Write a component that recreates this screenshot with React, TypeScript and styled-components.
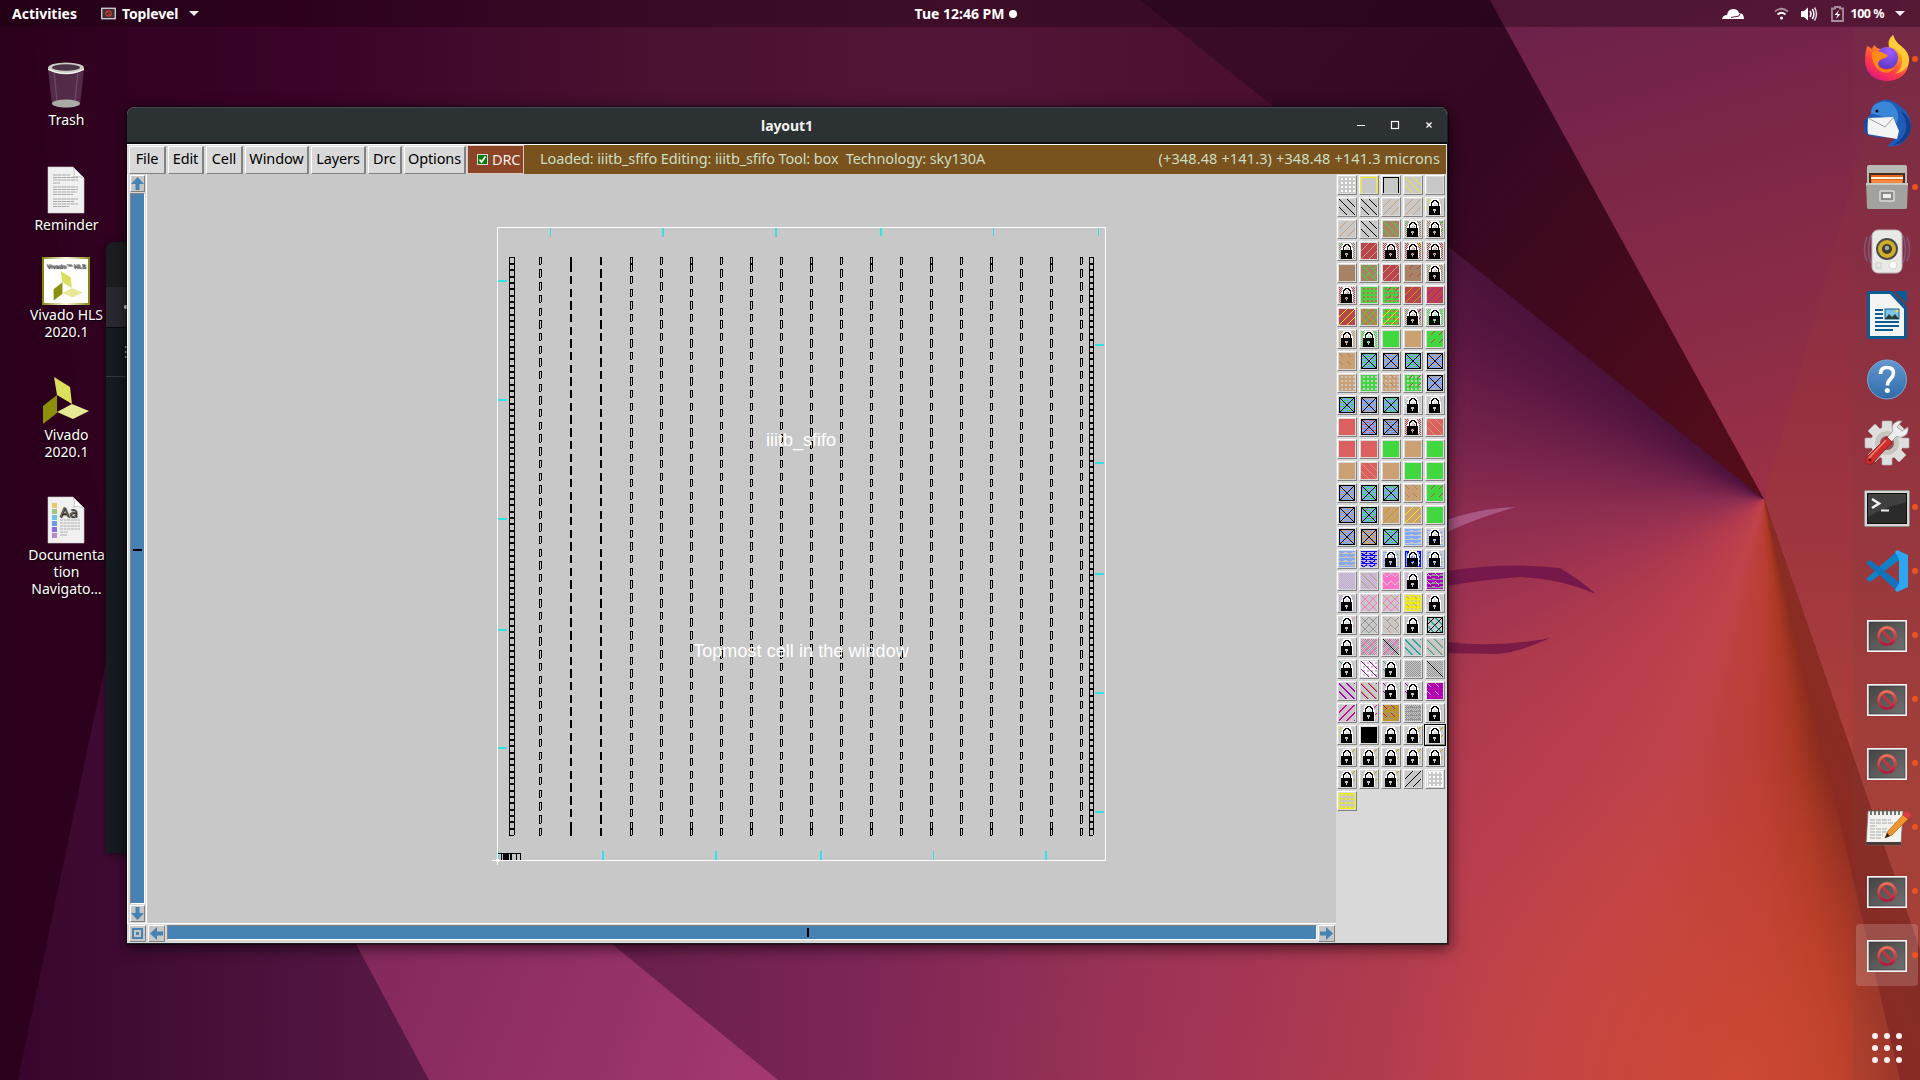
import React from "react";
import styled, { createGlobalStyle } from "styled-components";

const UI = `"Noto Sans", "Open Sans", sans-serif`;

const Global = createGlobalStyle`
  html, body { margin: 0; padding: 0; background: #2c001e; }
  * { box-sizing: border-box; }
`;

/* ---------- wallpaper ---------- */
const Screen = styled.div`
  position: relative;
  width: 1920px;
  height: 1080px;
  overflow: hidden;
  font-family: ${UI};
  color: #fff;
  display: flex;
  flex-direction: column;
`;
const WallSvg = styled.svg`
  position: absolute;
  left: 0;
  top: 0;
`;
const Fan = styled.div`
  position: absolute;
  inset: 0;
  clip-path: polygon(1271px 105px, 1764px 499px, 1920px 950px, 1920px 1080px, 640px 1080px, 560px 800px, 1271px 400px);
  background:
    linear-gradient(90deg, #6a1f4d 640px, rgba(120, 36, 86, 0.9) 860px, rgba(140, 45, 92, 0.6) 1120px, rgba(170, 55, 80, 0) 1480px),
    radial-gradient(circle at 1740px 1080px, rgba(212, 76, 52, 0.75), rgba(212, 76, 52, 0) 330px),
    conic-gradient(
      from 150deg at 1764px 499px,
      #8a2a20 0deg,
      #852820 16deg,
      #94301f 19deg,
      #ab3824 23deg,
      #ba3d34 30deg,
      #c0434a 48deg,
      #b83e4d 68deg,
      #b03a4e 84deg,
      #a03450 100deg,
      #8c2c50 118deg,
      #6e2048 136deg,
      #561540 150deg,
      #4a123a 159deg,
      #4a123a 360deg
    );
`;

const Wallpaper = () => (
  <>
    <WallSvg width="1920" height="1080" viewBox="0 0 1920 1080">
      <defs>
        <linearGradient id="base" x1="0" y1="0" x2="1200" y2="0" gradientUnits="userSpaceOnUse">
          <stop offset="0" stopColor="#2d001d" />
          <stop offset=".25" stopColor="#3a0327" />
          <stop offset=".55" stopColor="#4a1130" />
          <stop offset=".8" stopColor="#531537" />
          <stop offset="1" stopColor="#4b1030" />
        </linearGradient>
        <linearGradient id="low" x1="0" y1="0" x2="450" y2="0" gradientUnits="userSpaceOnUse">
          <stop offset="0" stopColor="#36052a" />
          <stop offset="1" stopColor="#5b1a49" />
        </linearGradient>
        <linearGradient id="pink" x1="380" y1="940" x2="760" y2="1080" gradientUnits="userSpaceOnUse">
          <stop offset="0" stopColor="#84295c" />
          <stop offset="1" stopColor="#a3386f" />
        </linearGradient>
      </defs>
      <rect width="1920" height="1080" fill="url(#base)" />
      <path d="M0 0H28L80 430L122 585L18 1080H0z" fill="#28001b" opacity=".35" />
      <path d="M122 585L18 1080H800V700z" fill="url(#low)" />
    </WallSvg>
    <Fan />
    <WallSvg width="1920" height="1080" viewBox="0 0 1920 1080">
      <defs>
        <linearGradient id="wedge" x1="1180" y1="0" x2="1764" y2="499" gradientUnits="userSpaceOnUse">
          <stop offset="0" stopColor="#3b0c28" />
          <stop offset=".4" stopColor="#340722" />
          <stop offset="1" stopColor="#560d18" />
        </linearGradient>
        <linearGradient id="upper" x1="1600" y1="0" x2="1740" y2="480" gradientUnits="userSpaceOnUse">
          <stop offset="0" stopColor="#6d214a" />
          <stop offset=".5" stopColor="#822947" />
          <stop offset="1" stopColor="#993045" />
        </linearGradient>
        <linearGradient id="right" x1="1890" y1="30" x2="1860" y2="800" gradientUnits="userSpaceOnUse">
          <stop offset="0" stopColor="#782747" />
          <stop offset=".5" stopColor="#973141" />
          <stop offset="1" stopColor="#ae4138" />
        </linearGradient>
        <linearGradient id="fold" x1="1800" y1="840" x2="1880" y2="800" gradientUnits="userSpaceOnUse">
          <stop offset="0" stopColor="#8c2820" />
          <stop offset="1" stopColor="#8a2c24" />
        </linearGradient>
      </defs>
      <path d="M340 880H576L612 944L778 1080H429L356 944z" fill="url(#pink)" />
      <path d="M1140 0H1490L1764 499z" fill="url(#wedge)" />
      <path d="M1490 0H1920V300L1764 499z" fill="url(#upper)" />
      <path d="M1920 0H1904L1764 499L1920 950z" fill="url(#right)" />
      <path d="M1764 499L1900 1080H1920V950z" fill="url(#fold)" />
      <path d="M1447 520Q1480 508 1516 507Q1480 517 1447 532z" fill="#a85783" />
      <path d="M1447 571Q1510 562 1560 568Q1580 580 1596 594Q1560 578 1520 577Q1480 580 1447 586z" fill="#76194a" />
      <path d="M1447 642Q1500 648 1550 638Q1520 652 1497 654L1447 653z" fill="#7a1c46" />
    </WallSvg>
  </>
);

/* ---------- top bar ---------- */
const TopBar = styled.header`
  position: relative;
  height: 27px;
  flex: none;
  display: grid;
  grid-template-columns: 1fr auto 1fr;
  align-items: center;
  background: rgba(20, 0, 14, 0.34);
  font-size: 14px;
  font-weight: 700;
  line-height: 26px;
  white-space: nowrap;
`;
const BarLeft = styled.div`
  display: flex;
  align-items: center;
  padding-left: 12px;
`;
const Word = styled.span<{ $ls?: number; $w?: number }>`
  letter-spacing: ${(p) => p.$ls ?? 0}px;
  width: ${(p) => (p.$w ? p.$w + "px" : "auto")};
  white-space: pre;
`;
const Clock = styled.div`
  display: flex;
  align-items: center;
  gap: 5px;
  padding-left: 12px;
`;
const Dot = styled.i`
  width: 8px;
  height: 8px;
  border-radius: 50%;
  background: #fff;
`;
const BarRight = styled.div`
  display: flex;
  justify-content: flex-end;
  align-items: center;
  padding-right: 15px;
  font-size: 12.5px;
`;
const Gap = styled.i<{ $w: number }>`
  width: ${(p) => p.$w}px;
`;
const Caret = styled.i`
  border: 5px solid transparent;
  border-top-color: #f2eef0;
  border-bottom: 0;
`;

/* ---------- desktop ---------- */
const Main = styled.div`
  position: relative;
  flex: 1;
  display: flex;
  justify-content: space-between;
`;
const Desk = styled.div`
  width: 132px;
  padding-top: 34px;
  display: grid;
  grid-template-rows: 105px 91px 120px 119px auto;
  align-content: start;
`;
const DeskItem = styled.div`
  display: flex;
  flex-direction: column;
  align-items: center;
  font-size: 14px;
  line-height: 17px;
  text-align: center;
  white-space: pre;
  text-shadow: 1px 1px 1px #000;
  svg {
    display: block;
    margin-bottom: 1px;
    flex: none;
  }
`;
const Label = styled.div<{ $drop?: boolean }>`
  padding-left: 1px;
  padding-top: ${(p) => (p.$drop ? 1 : 0)}px;
`;

const TrashIcon = () => (
  <svg width="48" height="48" viewBox="0 0 48 48">
    <path d="M6 8L10 44Q24 50 38 44L42 8z" fill="#573350" opacity=".85" />
    <path d="M12 10l3 30M36 10l-3 30" stroke="#7a5a74" strokeWidth="1.5" opacity=".6" />
    <ellipse cx="24" cy="42.500" rx="14" ry="4" fill="#a9aca5" />
    <ellipse cx="24" cy="7" rx="18" ry="5.500" fill="#c9cbc4" />
    <ellipse cx="24" cy="6.500" rx="14" ry="3.200" fill="#4c3446" />
    <path d="M6 7.500Q24 16 42 7.500V9Q24 17.500 6 9z" fill="#f1f1ee" />
  </svg>
);
const Page = ({ rich }: { rich?: boolean }) => (
  <svg width="48" height="48" viewBox="0 0 48 48">
    <path d="M6 1H31L42 12V47H6z" fill="#f0f0f0" stroke="#cfcfcf" strokeWidth=".6" />
    <path d="M31 1Q34 8 31 11Q36 9 42 12z" fill="#fff" stroke="#bdbdbd" strokeWidth=".8" />
    {rich ? (
      <>
        {["#e8c96a", "#9fc58a", "#71c4de", "#6f9de8", "#8871dd", "#b78ad0"].map((c, i) => (
          <rect key={c} x="10" y={7 + i * 6} width="5" height="5" fill={c} />
        ))}
        <text x="17.500" y="21" fontSize="15" fill="#555" fontFamily="Noto Sans">Aa</text>
        {[24, 27, 30, 33, 36].map((y, i) => (
          <path key={y} d={`M18 ${y}H${i === 4 ? 26 : 38}`} stroke="#aaa" strokeDasharray="3 .6" />
        ))}
        <path d="M18 39H25" stroke="#aaa" />
      </>
    ) : (
      [9, 11.5, 14, 17, 21, 23.5, 26, 28.5, 33, 35.5, 38, 40.5].map((y, i) => (
        <path key={y} d={`M11 ${y}H${[28, 36, 36, 18, 36, 36, 35, 31, 36, 32, 36, 27][i]}`} stroke="#a5a5a5" strokeWidth="1.100" strokeDasharray="4 .5" />
      ))
    )}
  </svg>
);
const Blades = () => (
  <g>
    <path d="M12 0L28 10L30 27L15 18z" fill="#dbdf5b" />
    <path d="M1 29L15 18V36L1 47z" fill="#8b8f0a" />
    <path d="M15 35L30 27L47 34L31 42z" fill="#e7e995" />
  </g>
);
const VivadoIcon = () => (
  <svg width="48" height="48" viewBox="0 0 48 48"><Blades /></svg>
);
const HlsIcon = () => (
  <svg width="48" height="48" viewBox="0 0 48 48">
    <defs>
      <linearGradient id="hls" x1="0" x2="1">
        <stop offset="0" stopColor="#85880f" />
        <stop offset=".5" stopColor="#fafae8" />
        <stop offset="1" stopColor="#85880f" />
      </linearGradient>
    </defs>
    <rect width="48" height="48" fill="url(#hls)" />
    <rect x="2" y="2" width="44" height="44" fill="#fff" />
    <path d="M0 0h2v48h-2zM46 0h2v48h-2z" fill="#85880f" />
    <text x="24" y="10.500" textAnchor="middle" fontSize="6" fontWeight="700" fill="#777" fontFamily="Liberation Sans">Vivado™ HLS</text>
    <g transform="translate(11 14) scale(.63)"><Blades /></g>
  </svg>
);

/* ---------- dock ---------- */
const Dock = styled.nav`
  width: 67px;
  display: flex;
  flex-direction: column;
  align-items: center;
  background: rgba(120, 60, 60, 0.16);
`;
const DockItem = styled.div<{ $run?: boolean; $active?: boolean }>`
  width: 100%;
  height: 64px;
  flex: none;
  display: flex;
  align-items: center;
  position: relative;
  padding-left: 10px;
  &::before {
    content: "";
    display: ${(p) => (p.$active ? "block" : "none")};
    position: absolute;
    inset: 1px 2px 1px 3px;
    border-radius: 4px;
    background: rgba(255, 255, 255, 0.17);
  }
  &::after {
    content: "";
    display: ${(p) => (p.$run ? "block" : "none")};
    position: absolute;
    right: 2px;
    top: 29px;
    width: 6px;
    height: 6px;
    border-radius: 50%;
    background: #e95420;
  }
  svg { position: relative; }
`;
const Apps = styled.div`
  margin-top: auto;
  margin-bottom: 17px;
  display: grid;
  grid-template-columns: repeat(3, 6px);
  gap: 6px;
  i {
    width: 6px;
    height: 6px;
    border-radius: 50%;
    background: #f3f0f0;
  }
`;

const S = ({ children, dy = 0 }: { children: React.ReactNode; dy?: number }) => (
  <svg width="48" height="48" viewBox={`0 ${-dy} 48 48`}>{children}</svg>
);
const Firefox = () => (
  <S dy={-1}>
    <defs>
      <linearGradient id="ff" x1=".8" y1="0" x2=".25" y2="1">
        <stop offset="0" stopColor="#fff44f" />
        <stop offset=".35" stopColor="#ff9a1f" />
        <stop offset=".7" stopColor="#ff3b45" />
        <stop offset="1" stopColor="#e31587" />
      </linearGradient>
      <radialGradient id="ffg" cx=".6" cy=".2" r=".8">
        <stop offset="0" stopColor="#a45bff" />
        <stop offset="1" stopColor="#5b3bc4" />
      </radialGradient>
    </defs>
    <path d="M4 12Q7 13 9 15L11 11Q13 14 17 15Q23 13 26 13Q24 6 30 1Q32 8 38 12Q46 19 46 26Q45 46 24 47Q3 46 2 26Q2 18 4 12z" fill="url(#ff)" />
    <circle cx="24" cy="24" r="11" fill="url(#ffg)" />
    <path d="M9 18Q15 15 22 20Q26 21 24 23L17 26Q13 30 17 34Q24 38 32 33Q26 42 17 37Q8 31 9 18z" fill="#ff8a16" />
    <path d="M30 1Q26 6 26 13Q36 14 39 24Q40 35 32 40Q46 36 46 26Q46 18 38 12Q32 8 30 1z" fill="#ffd03a" opacity=".85" />
  </S>
);
const Thunderbird = () => (
  <S>
    <path d="M11 6Q22 -4 34 5Q48 13 48 28Q47 40 36 46Q30 48 24 47L34 38Q10 40 2 34Q0 28 1 22L8 15Q8 9 11 6z" fill="#1f5cb8" />
    <path d="M11 6Q20 0 28 4Q38 12 34 24L20 18Q9 14 8 15Q8 9 11 6z" fill="#3a86d8" />
    <path d="M5 19L30 18L36 32L34 40L4 35z" fill="#f3f3f5" />
    <path d="M5 19L22 28L31 18" fill="none" stroke="#9b9ba5" />
    <path d="M1 22Q0 32 6 38Q3 30 5 19z" fill="#174a9b" />
    <path d="M38 12Q46 24 42 34Q38 42 30 46Q46 44 48 28Q47 17 38 12z" fill="#123f8c" />
    <circle cx="14" cy="12" r="1.500" fill="#111" />
  </S>
);
const Files = () => (
  <S>
    <path d="M4 4Q4 2 6 2H42Q44 2 44 4V26H4z" fill="#b9b9b6" />
    <rect x="6" y="10" width="36" height="10" fill="#45301f" />
    <path d="M8 12H40V20H8z" fill="#e8641c" />
    <path d="M8 14H40V16H8z" fill="#fff3d8" />
    <path d="M9 17H39V20H9z" fill="#f5893f" />
    <path d="M3 20H45L44 45Q44 46 42 46H6Q4 46 4 45z" fill="#a2a29e" />
    <path d="M3 20H45V22H3z" fill="#c9c9c6" />
    <rect x="17" y="28" width="14" height="10" rx="1" fill="#8a8a87" stroke="#dcdcda" strokeWidth="1.500" />
    <rect x="20" y="31" width="8" height="4" fill="#eee" />
  </S>
);
const Rhythm = () => (
  <S>
    <path d="M4 10Q-1 22 4 34M8 8Q3 22 8 36M44 10Q49 22 44 34M40 8Q45 22 40 36" fill="none" stroke="#7d83bf" strokeWidth="1.600" opacity=".45" />
    <rect x="9" y="3" width="30" height="43" rx="6" fill="#e9e9e7" stroke="#b9b9b9" />
    <circle cx="24" cy="22" r="11" fill="#4b4b4b" />
    <circle cx="24" cy="22" r="9" fill="#d0ae2a" />
    <circle cx="24" cy="22" r="5" fill="#3c3c30" />
    <circle cx="24" cy="21" r="2.300" fill="#9fa4b5" />
    <circle cx="30" cy="38" r="4" fill="#fff" stroke="#c8c8c8" strokeWidth=".7" />
    <rect x="13" y="36" width="5" height="5" fill="none" stroke="#ccc" />
  </S>
);
const Writer = () => (
  <S>
    <path d="M6 0H29L44 16V46Q44 48 42 48H6Q4 48 4 46V2Q4 0 6 0z" fill="#0b5c92" />
    <path d="M7 3H27L41 18V45H7z" fill="#f4f4f4" />
    <path d="M31 0H44V13z" fill="#0b5c92" />
    <path d="M12 19H20M12 23H20M12 27H20M12 31H36M12 35H36M12 39H30" stroke="#0b5c92" strokeWidth="2" />
    <rect x="22" y="18" width="14" height="10" fill="#7cc5ea" stroke="#0b5c92" />
    <path d="M22 28L26 23L29 26L32 23L36 28z" fill="#2c3b33" />
    <circle cx="34" cy="20" r="1.600" fill="#f0d040" />
  </S>
);
const Help = () => (
  <S>
    <defs>
      <linearGradient id="hp" x1="0" x2="0" y1="0" y2="1">
        <stop offset="0" stopColor="#6396d0" />
        <stop offset="1" stopColor="#2f6da8" />
      </linearGradient>
    </defs>
    <circle cx="24" cy="24.500" r="19.500" fill="url(#hp)" stroke="#7aa7d4" />
    <path d="M17.500 19Q17.500 12.500 24 12.500Q30.500 12.500 30.500 18Q30.500 21 27.500 24Q24.500 26.500 24.500 30.500" fill="none" stroke="#fff" strokeWidth="3.600" />
    <circle cx="24.300" cy="35.500" r="2.500" fill="#fff" />
  </S>
);
const Tools = () => (
  <S dy={-1}>
    <g fill="#dededd" stroke="#b3b3b0" strokeWidth=".7">
      {[0, 45, 90, 135, 180, 225, 270, 315].map((a) => (
        <rect key={a} x="19" y="3" width="10" height="12" rx="1" transform={`rotate(${a} 24 25)`} />
      ))}
    </g>
    <circle cx="24" cy="25" r="16" fill="#dededd" />
    <circle cx="24" cy="25" r="12" fill="#c5c5c2" />
    <circle cx="24" cy="25" r="7" fill="#9b4850" />
    <path d="M24 20L30 13Q27 6 35 3L39 3L34 9L39 13L45 9Q46 17 39 19Q36 20 34 18L28 24z" fill="#eee" stroke="#999" strokeWidth=".8" />
    <path d="M24 19L29 24L10 45Q5 48 3 44Q1 41 5 38z" fill="#cf2f2c" stroke="#8e1a1a" strokeWidth=".8" />
    <path d="M23 22L6 40" stroke="#f18378" strokeWidth="1.500" />
    <circle cx="7" cy="42" r="1.500" fill="#6b1010" />
  </S>
);
const Terminal = () => (
  <S dy={2}>
    <rect x="1.500" y="5.500" width="45" height="36" rx="1" fill="#d6d6d4" stroke="#8b8b89" />
    <rect x="4.500" y="8.500" width="39" height="30" fill="#2b2b2b" stroke="#111" />
    <path d="M5 9H43V17Q22 22 5 32z" fill="#4a4a4a" opacity=".7" />
    <path d="M9 14L16 18.500L9 23" fill="none" stroke="#eee" strokeWidth="2.600" />
    <path d="M18 25.500H26" stroke="#eee" strokeWidth="2" />
  </S>
);
const Code = () => (
  <S>
    <path d="M3 32L7 35L36 13V3L32 6z" fill="#0d82cc" />
    <path d="M3 16L7 13L36 35V45L32 42z" fill="#1272bb" />
    <path d="M34 3L45 8V40L34 45L32 43L36 36V12L32 5z" fill="#2da6f2" />
    <path d="M36 14V34L22 24z" fill="#963a3f" />
  </S>
);
const Blocked = () => (
  <S>
    <defs>
      <linearGradient id="bk" x1="0" y1="0" x2="1" y2="1">
        <stop offset="0" stopColor="#444" />
        <stop offset="1" stopColor="#707070" />
      </linearGradient>
      <linearGradient id="bk2" x1="0" x2="0" y1="0" y2="1">
        <stop offset="0" stopColor="#ee6c54" />
        <stop offset="1" stopColor="#b3183f" />
      </linearGradient>
    </defs>
    <rect x="4" y="9" width="40" height="32" fill="#f2f2f2" />
    <rect x="6" y="11" width="36" height="28" fill="url(#bk)" stroke="#333" strokeWidth=".6" />
    <path d="M17.500 18L30.500 32" stroke="#c93340" strokeWidth="2.600" />
    <circle cx="24" cy="25" r="8.500" fill="none" stroke="url(#bk2)" strokeWidth="2.800" />
  </S>
);
const Notes = () => (
  <S>
    <path d="M5 8H40L38 42H3z" fill="#f2f2ee" stroke="#7a6d68" strokeWidth=".8" />
    <path d="M3 39H38V42H3z" fill="#4b3b38" />
    <path d="M8 7V12M12 7V12M16 7V12M20 7V12M24 7V12M28 7V12M32 7V12M36 7V12" stroke="#555" strokeWidth="1.600" />
    <path d="M7 17H28M7 20H35M7 23H14M7 26H24M7 29H30M7 32H20M7 35H18" stroke="#a9a9a9" strokeDasharray="5 1" />
    <path d="M22 35L25 28L40 12L45 16L29 32z" fill="#f0962d" stroke="#b4631a" strokeWidth=".7" />
    <path d="M40 12L42 9Q47 8 48 12L45 16z" fill="#e0394b" />
    <path d="M22 35L24 30L27 33z" fill="#222" />
  </S>
);

/* ---------- windows ---------- */
const BackWin = styled.div`
  position: absolute;
  left: 106px;
  top: 215px;
  width: 60px;
  height: 611px;
  border-radius: 8px 0 0 0;
  background: #151b20;
  overflow: hidden;
  box-shadow: 0 2px 8px rgba(0, 0, 0, 0.5);
`;
const BackHead = styled.div`
  height: 45px;
  background: #1d1c22;
`;
const BackTab = styled.div`
  height: 41px;
  background: #2a2931;
  border-bottom: 1px solid #08080a;
  padding: 18px 0 0 18px;
  &::after {
    content: "";
    display: block;
    width: 4px;
    height: 4px;
    border-radius: 50%;
    background: #ddd;
  }
`;
const BackRow = styled.div`
  height: 49px;
  border-bottom: 1px solid #333a40;
  padding: 18px 0 0 19px;
  &::after {
    content: "";
    display: block;
    width: 2px;
    height: 12px;
    background: repeating-linear-gradient(#8a8d90 0 2px, transparent 2px 5px);
  }
`;
const Win = styled.section`
  position: absolute;
  left: 127px;
  top: 80px;
  width: 1321px;
  height: 837px;
  border-radius: 8px 8px 0 0;
  background: #d9d9d9;
  overflow: hidden;
  display: flex;
  flex-direction: column;
  border-right: 1px solid #1d1c1e;
  border-bottom: 1px solid #1d1c1e;
`;
const WinShadow = styled.div`
  position: absolute;
  left: 127px;
  top: 80px;
  width: 1321px;
  height: 837px;
  border-radius: 8px 8px 0 0;
  box-shadow: 0 3px 14px 2px rgba(0, 0, 0, 0.55), 0 0 0 1px rgba(0, 0, 0, 0.4);
`;
const TitleBar = styled.div`
  height: 37px;
  flex: none;
  display: grid;
  grid-template-columns: 1fr auto 1fr;
  align-items: center;
  background: #2c3134;
  border-top: 1px solid #454b4e;
  border-bottom: 2px solid #0b0d0e;
  font-size: 14px;
  font-weight: 700;
  color: #f3f3f1;
`;
const WinButtons = styled.div`
  display: flex;
  justify-content: flex-end;
  padding-right: 14px;
`;
const MenuBar = styled.div`
  height: 30px;
  flex: none;
  display: flex;
  padding-left: 1px;
  padding-right: 1px;
  border-top: 1px solid #fff;
  font-size: 14.5px;
  line-height: 26px;
  white-space: pre;
`;
const MenuBtn = styled.div<{ $w: number }>`
  width: ${(p) => p.$w}px;
  height: 28px;
  margin: 1px 1px 0 1px;
  border: 1px solid;
  border-width: 1px 2px 1px 1px;
  border-color: #fff #828282 #828282 #fff;
  background: #d9d9d9;
  color: #000;
  display: flex;
  justify-content: center;
  line-height: 23px;
`;
const Drc = styled.div`
  width: 57px;
  background: #8b4426;
  border: 1px solid #d9c9c0;
  color: #f4ece8;
  display: flex;
  align-items: center;
  padding: 0 0 1px 9px;
  gap: 4px;
`;
const Status = styled.div`
  flex: 1;
  display: flex;
  justify-content: space-between;
  background: #7a521e;
  color: #c9dfc4;
  padding: 0 6px 0 16px;
`;
const Body = styled.div`
  flex: 1;
  display: flex;
  min-height: 0;
`;
const Left = styled.div`
  width: 1209px;
  display: grid;
  grid-template-columns: 20px 1fr;
  grid-template-rows: 749px 20px;
`;
const VScroll = styled.div`
  display: flex;
  flex-direction: column;
  padding: 1px 1px 1px 2px;
  border-left: 1px solid #fff;
  border-right: 1px solid #fff;
  gap: 1px;
`;
const HScroll = styled.div`
  display: flex;
  border-top: 1px solid #fff;
  padding: 1px 1px 0 1px;
  gap: 1px;
`;
const Corner = styled.div`
  border-top: 1px solid #fff;
  padding: 1px 0 0 2px;
`;
const ArrowBox = styled.div`
  width: 17px;
  height: 17px;
  flex: none;
  background: #c6c6c6;
  border: 1px solid;
  border-color: #fff #828282 #828282 #fff;
  display: grid;
  place-items: center;
  ${VScroll} & {
    width: 15px;
  }
`;
const Trough = styled.div<{ $v?: boolean }>`
  flex: 1;
  background: #4682b4;
  border: 1px solid;
  border-color: #828282 #fff #fff #828282;
  margin: ${(p) => (p.$v ? "0" : "0 0 3px 1px")};
  display: flex;
  padding: ${(p) => (p.$v ? "355px 0 0 2px" : "2px 0 0 639px")};
  &::after {
    content: "";
    background: #000;
    width: ${(p) => (p.$v ? 9 : 2)}px;
    height: ${(p) => (p.$v ? 2 : 9)}px;
  }
`;
const Canvas = styled.div`
  background: #c8c8c8;
  svg { display: block; }
`;
const Arrow = ({ r }: { r: number }) => (
  <svg width="13" height="13" viewBox="0 0 13 13">
    <path d="M6.500 0L13 7H8.500V13H4.500V7H0z" fill="#4682b4" transform={`rotate(${r} 6.500 6.500)`} />
  </svg>
);

/* Layout drawing: window coordinates start at (147,174). */
const PITCH = 12.689;
const layoutPath = () => {
  let d = "";
  const cell = (x: number, a: number, b: number, solid: boolean) => {
    const y = Math.round(a);
    const e = Math.ceil(b);
    if (solid) {
      d += `M${x} ${y}h2v${e - y}h-2z`;
      return;
    }
    d += `M${x} ${y}h1v${e - y}h-1zM${x + 2} ${y}h1v${e - y - 1}h-1zM${x} ${y}h3v1h-3zM${x} ${e - 1}h2v1h-2z`;
  };
  for (let i = 0; i < 19; i++) {
    const x = i === 0 ? 539 : 540 + 30 * i;
    const solid = i === 1 || i === 2;
    if (i % 2 === 0) {
      for (let k = 0; k < 46; k++) cell(x, 256.8 + k * PITCH, 264.7 + k * PITCH, solid);
    } else {
      cell(x, 257, 265, solid);
      for (let k = 0; k < 45; k++) cell(x, 263.2 + k * PITCH, 271.1 + k * PITCH, solid);
      cell(x, 828, 836, solid);
    }
  }
  for (const [x, w] of [[509, 6], [1089, 5]]) {
    d += `M${x} 257h1v579h-1zM${x + w - 1} 257h1v578h-1zM${x} 257h${w}v1h-${w}z`;
    for (let k = 1; k < 91; k++) d += `M${x} ${Math.round(256.7 + k * 6.345)}h${w}v2h-${w}z`;
    d += `M${x} 835h${w - 1}v1h-${w - 1}z`;
  }
  d += "M498 853h23v1h-23zM501 853h1v7h-1zM503 853h6v7h-6zM510 853h2v7h-2zM516 853h1v7h-1zM520 853h1v7h-1z";
  return d;
};
const LAYOUT = layoutPath();
const TICKS: number[][] = [
  [550, 228, 1, 8], [662, 228, 2, 9], [775, 228, 2, 9], [880, 228, 2, 8], [993, 228, 1, 8], [1098, 228, 1, 8],
  [498, 280, 9, 2], [498, 399, 9, 2], [498, 518, 9, 2], [498, 629, 9, 2], [498, 747, 9, 2],
  [1095, 344, 9, 2], [1095, 462, 9, 2], [1095, 573, 9, 2], [1095, 692, 9, 2], [1095, 811, 9, 2],
  [498, 851, 1, 9], [602, 851, 2, 9], [715, 851, 2, 9], [820, 851, 2, 9], [933, 851, 1, 9], [1045, 851, 2, 9],
];
const Drawing = () => (
  <svg width="1189" height="749" viewBox="147 174 1189 749">
    <g shapeRendering="crispEdges">
      {TICKS.map(([x, y, w, h], i) => (
        <rect key={i} x={x} y={y} width={w} height={h} fill="#2fe3e3" />
      ))}
      <path d="M550 236h1v1h-1zM663 236h1v1h-1zM776 236h1v1h-1z" fill="#ff72c8" />
      <path d={LAYOUT} fill="#000" />
      <path d="M497 227h609v1h-609zM1105 227h1v634h-1zM497 227h1v638h-1zM492 860h614v1h-614zM496 859h3v3h-3z" fill="#fff" />
    </g>
    <g fill="#fff" fontFamily="Liberation Sans, Arial, sans-serif" fontSize="18" textAnchor="middle">
      <text x="801" y="446">iiitb_sfifo</text>
      <text x="801" y="657" letterSpacing=".06">Topmost cell in the window</text>
    </g>
  </svg>
);

/* ---------- layer palette ---------- */
const Palette = styled.div`
  flex: 1;
  padding: 1px 0 0 1px;
  display: grid;
  grid-template-columns: repeat(5, 22px);
  grid-auto-rows: 22px;
  align-content: start;
`;
const TileBox = styled.div<{ $sel?: boolean }>`
  width: 20px;
  height: 20px;
  background: #d9d9d9;
  border: 1px solid;
  border-color: #fff #828282 #828282 #fff;
  padding: 1px;
  outline: ${(p) => (p.$sel ? "1px solid #000" : "none")};
  svg { display: block; }
`;
const C: Record<string, string> = {
  G: "#c8c8c8", k: "#000000", w: "#ffffff", y: "#f2ee00", t: "#cba072", b: "#a88264", r: "#b8444d", g: "#40d73f",
  s: "#dd6060", u: "#7fa8ff", B: "#0a0aff", p: "#ff72c8", v: "#a800b8", l: "#c2a8dc", c: "#20a8a0", m: "#cc0a96",
  o: "#c8960a", e: "#949494",
};
const LOCK = [
  "...wwwwwwww.....",
  "...ww####ww.....",
  "..ww##ww##ww....",
  "..w##w..w##w....",
  "..w#ww..ww#w....",
  ".ww#w....w#ww...",
  ".ww#w....w#ww...",
  ".###########w...",
  ".###########w...",
  ".###########w...",
  ".####...####w...",
  ".####...####w...",
  ".#####.#####w...",
  ".#####.#####w...",
  ".###########w...",
  ".###########....",
];
type Fn = (x: number, y: number) => boolean;
const F: Record<string, Fn> = {
  dn: (x, y) => ((x - y + 32) & 7) === 0,
  up: (x, y) => ((x + y) & 7) === 7,
  Dn: (x, y) => ((x - y + 33) & 7) < 2,
  Up: (x, y) => ((x + y) & 7) > 5,
  sd: (x, y) => ((x - y + 32) & 7) === 0 && (y & 7) < 4,
  su: (x, y) => ((x + y) & 7) === 7 && (y & 7) < 4,
  xx: (x, y) => ((x - y + 32) & 7) === 0 || ((x + y) & 7) === 7,
  dt: (x, y) => (x & 3) > 1 && ((y + 3) & 3) < 2,
  ck: (x, y) => ((x + y) & 1) === 0,
  fr: (x, y) => x === 0 || y === 0 || x === 15 || y === 15,
  f3: (x, y) => x === 0 || y === 0 || x === 15,
  hd: (x, y) => ((y & 3) === 1 && (x & 7) < 5) || ((y & 3) === 3 && ((x + 4) & 7) < 5),
  hs: (x, y) => (y & 3) === 2 || ((y & 3) === 1 && (x & 7) > 4),
  cr: (x, y) => x === 0 || y === 0 || x === 15 || y === 15 || x === y || x + y === 15 || (x > 6 && x < 9 && y > 6 && y < 9),
  dg: (x, y) => x === y,
  ns: (x, y) => (x * 7 + y * 5 + ((x * y) & 5)) % 6 < 2,
};
const px = (f: Fn) => {
  let d = "";
  for (let y = 0; y < 16; y++)
    for (let x = 0; x < 16; x++) if (f(x, y)) d += `M${x} ${y}h1v1h-1z`;
  return d;
};
const P: Record<string, string> = Object.fromEntries(Object.entries(F).map(([k, f]) => [k, px(f)]));
const LOCK_K = px((x, y) => LOCK[y][x - 1 < 0 ? 15 : x - 1] === "#");
const LOCK_W = px((x, y) => LOCK[y][x - 1 < 0 ? 15 : x - 1] === "w");

/* Each tile: base colour, then pattern+colour pairs; L marks a locked layer. */
const ROWS = [
  "G,dtw G,f3y G,f3k G,dny G",
  "G,dnk G,dnk G,upt G,upt G,sdy,L",
  "G,upt G,dnk b,dng G,ckb,sdg,L G,ckb,sug,L",
  "G,ckb,sdg,L r,upt G,ckr,L G,ckr,suy,L G,ckr,L",
  "b b,sug,sdr,dng r,upt b,sur G,ckb,sdg,L",
  "G,ckr,L g,dts g,dts,sur r,upo r,upm",
  "r,upy b,xxg,dno g,dts,upy G,ckb,sum,L g,ckG,L",
  "t,ckG,L G,ckg,L g t g,sur",
  "t,sdb u,hdg,crk u,hdt,crk u,hdg,crk u,sdt,hdt,crk",
  "t,dtG g,dtG t,dtG,sdb g,dtG,sur u,dtt,crk",
  "u,hdg,crk u,dtt,crk u,dtg,crk G,sdw,L G,L",
  "s u,hds,crk u,sus,hdb,crk G,ckr,L s,dnt",
  "s s g t g",
  "t s,dnt t g g",
  "u,hdt,crk u,hdg,crk u,dtg,crk t,sdb g,sur",
  "u,hdt,crk u,hdg,sur,crk t,upo t,upy g",
  "u,sut,hdt,crk t,hdu,crk u,hdg,crk u,hsG G,hdu,L",
  "u,hsG,dnt B,hdG,dtl G,hdu,L u,dtB,frB,L G,hdu,L",
  "l,ckG l,ckG,dnt p,sdG,suG G,ckl,L v,hse,sdG",
  "G,ckl,L G,xxp G,xxp,sdt y,dtG,sdt,fry G,sdp,L",
  "G,sup,L G,xxe G,dnt,sue G,L G,Dnc,upk,frk",
  "G,L G,cke,xxp G,cke,xxp,dgk G,Dnc G,Dnc,dnt",
  "G,sdc,L w,dtG,sdv,dnv G,sdc,L G,cke G,cke,dgk",
  "G,Dnv G,Dnv,dno G,sdv,L G,sdv,L v,dtm,sdl",
  "G,Upm G,sum,L o,nse,sdm G,cke,hse G,L",
  "G,sdy,L k G,L G,suo,L G,suo,L,*",
  "G,suo,L G,suo,L G,suo,L G,suo,L G,suo,L",
  "G,suo,L G,suo,L G,suo,L G,upk G,dtw,frw",
  "G,dty,fry",
];
const Tile = ({ spec }: { spec: string }) => {
  const [base, ...layers] = spec.split(",");
  return (
    <TileBox $sel={layers.includes("*")}>
      <svg width="16" height="16" viewBox="0 0 16 16" shapeRendering="crispEdges">
        <rect width="16" height="16" fill={C[base]} />
        {layers.map((l, i) =>
          l === "L" ? (
            <g key={i}>
              <path d="M4 3h5v4h-5z" fill="#fff" opacity=".5" />
              <path d={LOCK_W} fill="#fff" />
              <path d={LOCK_K} fill="#000" />
            </g>
          ) : l === "*" ? null : (
            <path key={i} d={P[l.slice(0, 2)]} fill={C[l[2]]} />
          )
        )}
      </svg>
    </TileBox>
  );
};

const MENUS: [string, number][] = [["File", 37], ["Edit", 36], ["Cell", 37], ["Window", 64], ["Layers", 55], ["Drc", 34], ["Options", 62]];

export default function App() {
  return (
    <Screen>
      <Global />
      <Wallpaper />
      <TopBar>
        <BarLeft>
          <Word $w={89}>Activities</Word>
          <svg width="16" height="14" viewBox="0 0 16 14">
            <rect x=".75" y="1.250" width="13.500" height="10.500" fill="#3b3236" stroke="#e8e4e6" strokeWidth="1.200" />
            <circle cx="7.500" cy="6.500" r="2.700" fill="none" stroke="#d8392f" strokeWidth="1.200" />
            <path d="M6 4.500l3 4" stroke="#d8392f" />
          </svg>
          <Gap $w={5} />
          <Word $w={67} $ls={-0.15}>Toplevel</Word>
          <Caret />
        </BarLeft>
        <Clock>
          <Word>Tue 12:46 PM</Word>
          <Dot />
        </Clock>
        <BarRight>
          <svg width="23" height="12" viewBox="0 0 23 12">
            <path d="M0 11Q1 7 5 7Q6 1 11 1Q16 1 17 5Q22 5 22 11z" fill="#fff" />
            <path d="M9 9.500L17 8L18 5.500" stroke="#5b1c3d" fill="none" />
          </svg>
          <Gap $w={29} />
          <svg width="15" height="14" viewBox="0 0 15 14" fill="none" stroke="#fff" strokeWidth="1.700">
            <path d="M1 4.500Q7.500 -1 14 4.500" opacity=".5" />
            <path d="M3.500 7.500Q7.500 4 11.500 7.500" />
            <circle cx="7.500" cy="11" r="1.500" fill="#fff" stroke="none" />
          </svg>
          <Gap $w={12} />
          <svg width="17" height="16" viewBox="0 0 17 16" fill="none" stroke="#fff" strokeWidth="1.500">
            <path d="M0 5H3L7 1.500V14.500L3 11H0z" fill="#fff" stroke="none" />
            <path d="M9 5Q11 8 9 11M11.300 3Q14.500 8 11.300 13" />
            <path d="M13.500 1.500Q17.500 8 13.500 14.500" opacity=".8" />
          </svg>
          <Gap $w={13} />
          <svg width="13" height="16" viewBox="0 0 13 16">
            <path d="M1 2.500H4V1H9V2.500H12V15H1z" fill="none" stroke="#a88e9c" strokeWidth="1.800" />
            <path d="M8 4L3.500 9H6.500L5 13L9.500 8H6.500z" fill="#fff" />
          </svg>
          <Gap $w={7} />
          <Word $ls={-0.5}>100 %</Word>
          <Gap $w={11} />
          <Caret />
        </BarRight>
      </TopBar>
      <Main>
        <Desk>
          <DeskItem><TrashIcon /><Label $drop>Trash</Label></DeskItem>
          <DeskItem><Page /><Label $drop>Reminder</Label></DeskItem>
          <DeskItem><HlsIcon /><Label>{"Vivado HLS\n2020.1"}</Label></DeskItem>
          <DeskItem><VivadoIcon /><Label>{"Vivado\n2020.1"}</Label></DeskItem>
          <DeskItem><Page rich /><Label $drop>{"Documenta\ntion\nNavigato…"}</Label></DeskItem>
        </Desk>
        <BackWin>
          <BackHead />
          <BackTab />
          <BackRow />
        </BackWin>
        <WinShadow />
        <Win>
          <TitleBar>
            <span />
            <Word $ls={-0.1}>layout1</Word>
            <WinButtons>
              <svg width="76" height="12" viewBox="0 0 76 12" fill="none" stroke="#fff">
                <path d="M0 6.500H8" stroke="#fff" />
                <rect x="34.500" y="2.500" width="7" height="7" strokeWidth="1.200" />
                <path d="M69.500 3.500l5 5M74.500 3.500l-5 5" strokeWidth="1.400" />
              </svg>
            </WinButtons>
          </TitleBar>
          <MenuBar>
            {MENUS.map(([t, w]) => (
              <MenuBtn key={t} $w={w}><Word $ls={-0.12}>{t}</Word></MenuBtn>
            ))}
            <Drc>
              <svg width="11" height="11" viewBox="0 0 11 11">
                <rect x=".5" y=".5" width="10" height="10" fill="#0b7a0b" stroke="#d9d9d9" />
                <path d="M2.500 5.500L4.500 8L8.500 2.500" stroke="#fff" strokeWidth="1.700" fill="none" />
              </svg>
              <Word $ls={-0.2}>DRC</Word>
            </Drc>
            <Status>
              <Word $ls={-0.12}>{"Loaded: iiitb_sfifo Editing: iiitb_sfifo Tool: box  Technology: sky130A"}</Word>
              <Word $ls={0.13}>(+348.48 +141.3) +348.48 +141.3 microns</Word>
            </Status>
          </MenuBar>
          <Body>
            <Left>
              <VScroll>
                <ArrowBox><Arrow r={0} /></ArrowBox>
                <Trough $v />
                <ArrowBox><Arrow r={180} /></ArrowBox>
              </VScroll>
              <Canvas><Drawing /></Canvas>
              <Corner>
                <ArrowBox>
                  <svg width="11" height="11" viewBox="0 0 11 11">
                    <rect x="1" y="1" width="9" height="9" fill="none" stroke="#4682b4" strokeWidth="2" />
                    <rect x="4" y="4" width="3" height="3" fill="#4682b4" />
                  </svg>
                </ArrowBox>
              </Corner>
              <HScroll>
                <ArrowBox><Arrow r={270} /></ArrowBox>
                <Trough />
                <ArrowBox><Arrow r={90} /></ArrowBox>
              </HScroll>
            </Left>
            <Palette>
              {ROWS.flatMap((r, i) => r.split(" ").map((s, j) => <Tile key={i + "-" + j} spec={s} />))}
            </Palette>
          </Body>
        </Win>
        <Dock>
          <DockItem $run><Firefox /></DockItem>
          <DockItem><Thunderbird /></DockItem>
          <DockItem $run><Files /></DockItem>
          <DockItem><Rhythm /></DockItem>
          <DockItem><Writer /></DockItem>
          <DockItem><Help /></DockItem>
          <DockItem><Tools /></DockItem>
          <DockItem $run><Terminal /></DockItem>
          <DockItem $run><Code /></DockItem>
          <DockItem $run><Blocked /></DockItem>
          <DockItem $run><Blocked /></DockItem>
          <DockItem $run><Blocked /></DockItem>
          <DockItem $run><Notes /></DockItem>
          <DockItem $run><Blocked /></DockItem>
          <DockItem $run $active><Blocked /></DockItem>
          <Apps>{Array.from({ length: 9 }, (_, i) => <i key={i} />)}</Apps>
        </Dock>
      </Main>
    </Screen>
  );
}
